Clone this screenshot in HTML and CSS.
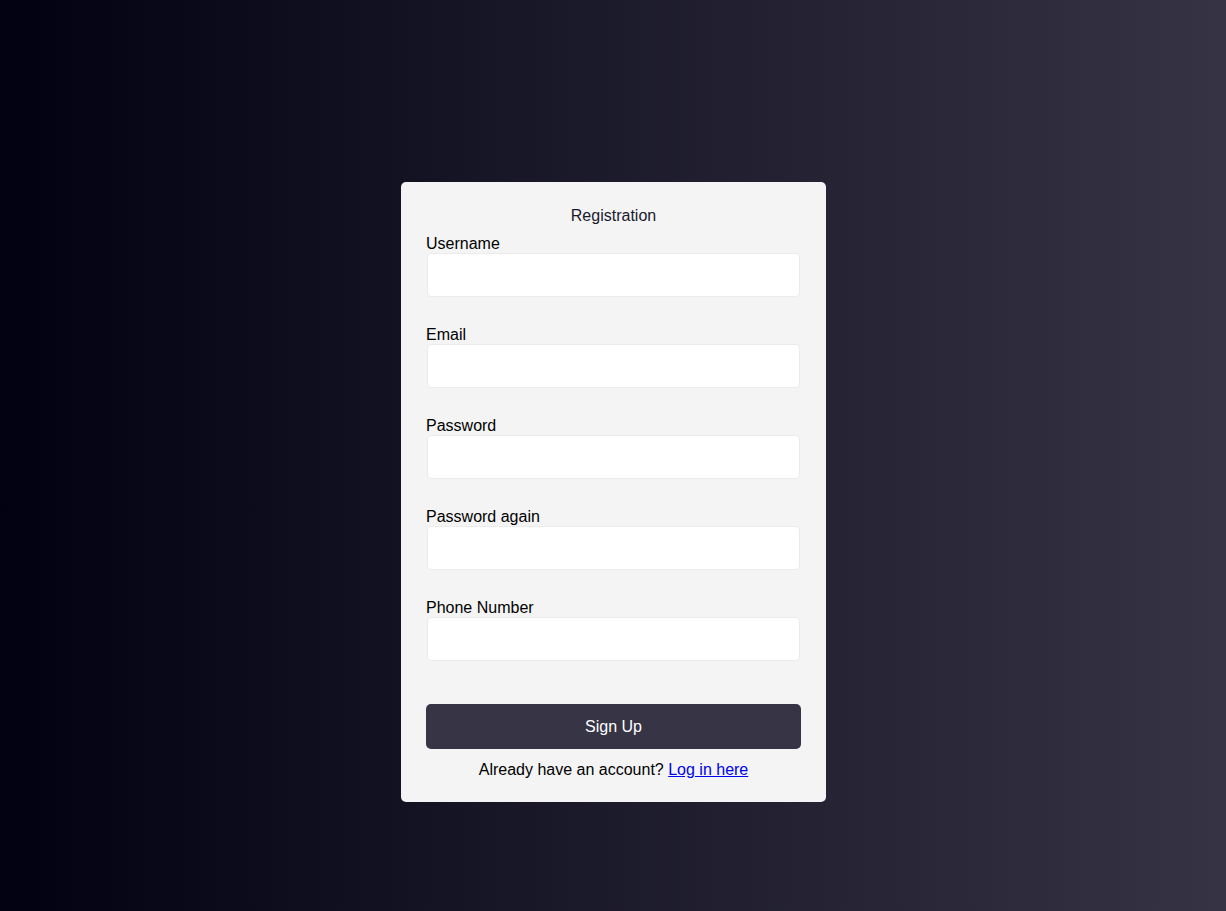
FILE: index.html
```html
<!DOCTYPE html>
<html>
<head>
<meta charset="utf-8">
<link rel="stylesheet" href="styles.css">
</head>
<body>
<div class="card">
  <div class="title">Registration</div>
  <form class="form">
    <div class="group"><label>Username</label><input type="text"></div>
    <div class="group"><label>Email</label><input type="email"></div>
    <div class="group"><label>Password</label><input type="password"></div>
    <div class="group"><label>Password again</label><input type="password"></div>
    <div class="group"><label>Phone Number</label><input type="text"></div>
    <button type="button" class="btn">Sign Up</button>
  </form>
  <p class="alt">Already have an account? <a href="#">Log in here</a></p>
</div>
</body>
</html>
```
FILE: styles.css
```css
html, body { height: 100%; }
body {
  margin: 0;
  font-family: "Liberation Sans", Arial, sans-serif;
  font-size: 16px;
  background: linear-gradient(to right, #020112, #363444);
  display: flex;
  align-items: center;
  justify-content: center;
}
.card {
  width: 425px;
  box-sizing: border-box;
  background: #f4f4f4;
  border-radius: 5px;
  padding: 25px 25px 23px;
  margin-top: 73px;
  margin-left: 1px;
}
.title {
  text-align: center;
  color: #1a1a2e;
  line-height: 18px;
  margin-bottom: 10px;
}
.form { display: flex; flex-direction: column; }
.group { display: flex; flex-direction: column; margin-bottom: 29px; }
.group label { line-height: 18px; color: #000; }
.group input {
  height: 44px;
  box-sizing: border-box;
  border: 1px solid #ebebeb;
  border-radius: 4px;
  background: #fff;
  margin: 0 1px;
  outline: none;
}
.btn {
  margin-top: 14px;
  height: 45px;
  border: none;
  border-radius: 5px;
  background: #363445;
  color: #fff;
  font-family: inherit;
  font-size: 16px;
}
.alt {
  margin: 12px 0 0;
  text-align: center;
  line-height: 18px;
  color: #000;
}
.alt a { color: #0000ee; }
```
